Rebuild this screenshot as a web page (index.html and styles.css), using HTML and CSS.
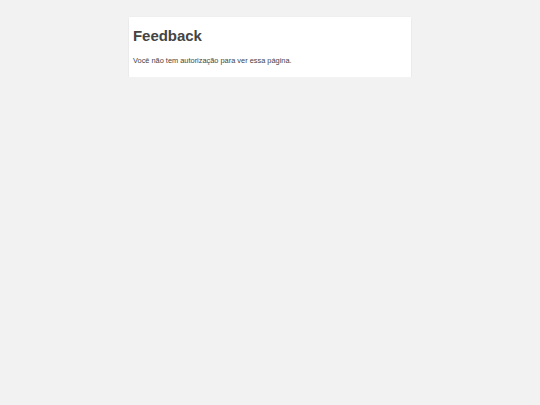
FILE: index.html
```
<!DOCTYPE html>
<html>
<head>
<meta charset="utf-8">
<link rel="stylesheet" href="styles.css">
</head>
<body>
<div class="card">
<h1 class="title">Feedback</h1>
<p class="msg">Você não tem autorização para ver essa página.</p>
</div>
</body>
</html>
```
FILE: styles.css
```
html, body { margin: 0; padding: 0; }
body { background: #f2f2f2; font-family: "Liberation Sans", Arial, sans-serif; color: #444; }
.card {
  width: 274px;
  margin: 17px auto 0;
  padding: 9px 4px 12px;
  background: #fff;
  box-shadow: 0 2px 2px -1px rgba(0,0,0,0.25), 0 0 1px rgba(0,0,0,0.08);
}
.title { margin: 0; font-size: 15px; font-weight: bold; line-height: 20px; color: #444; letter-spacing: -0.05px; }
.msg { margin: 10px 0 0; font-size: 7.4px; line-height: 9px; color: #444; }
```
